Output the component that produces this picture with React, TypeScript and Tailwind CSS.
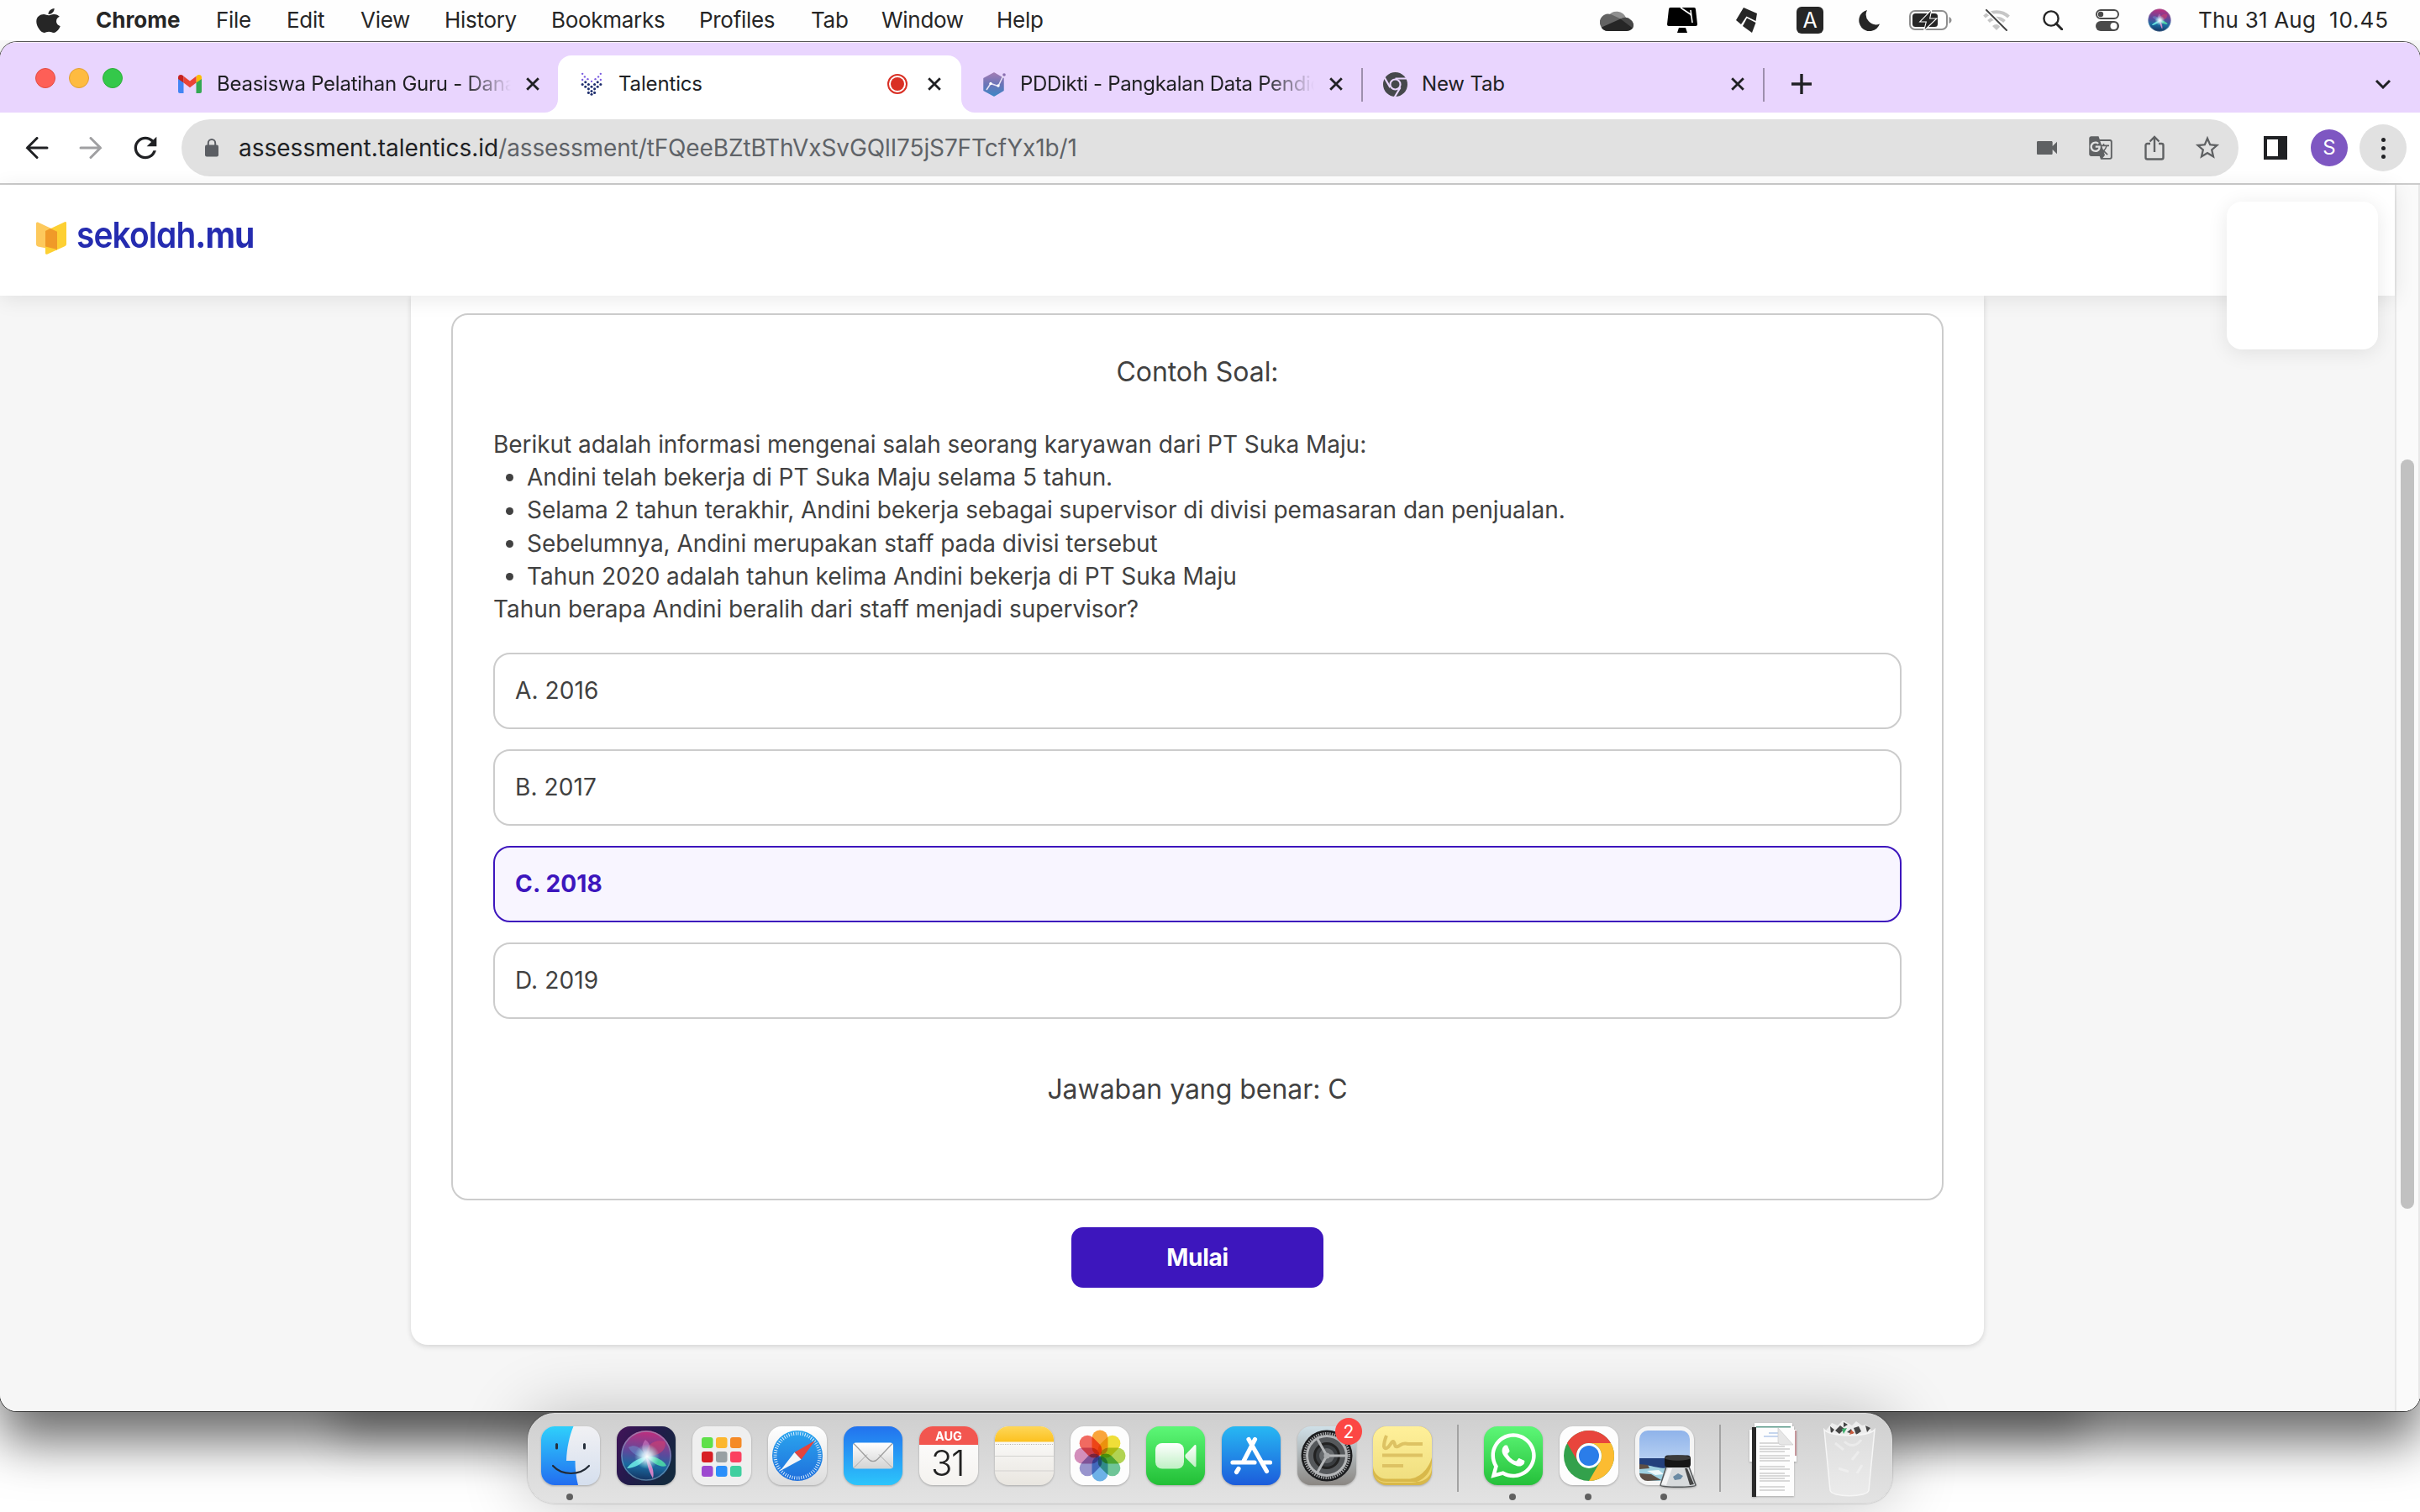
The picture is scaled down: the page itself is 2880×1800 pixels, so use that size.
import React from "react";
import { FaApple, FaWhatsapp } from "react-icons/fa";
import { MdGTranslate, MdStarBorder, MdVideocam, MdRefresh } from "react-icons/md";

const menuItems = [
  { label: "Chrome", cls: "w-[143px] font-bold tracking-normal" },
  { label: "File", cls: "w-[84px]" },
  { label: "Edit", cls: "w-[88px]" },
  { label: "View", cls: "w-[100px]" },
  { label: "History", cls: "w-[127px]" },
  { label: "Bookmarks", cls: "w-[176px]" },
  { label: "Profiles", cls: "w-[133px]" },
  { label: "Tab", cls: "w-[84px]" },
  { label: "Window", cls: "w-[137px]" },
  { label: "Help", cls: "w-[60px]" },
];

function MenuBar() {
  return (
    <div className="relative z-20 flex h-12 w-full shrink-0 items-center justify-between bg-[#fefefe] text-[26px] leading-[48px] text-[#262626]">
      <div className="flex h-full items-center pl-[43px] tracking-[-0.3px]">
        <FaApple className="mr-[42px] h-[33px] w-[29px]" preserveAspectRatio="none" />
        {menuItems.map((m) => (
          <div key={m.label} className={"whitespace-nowrap " + m.cls}>{m.label}</div>
        ))}
      </div>
      <div className="flex h-full items-center">
        <svg className="mr-10 h-[26px] w-10" viewBox="0 0 40 26">
          <path d="M10 8a12 12 0 0 1 21 2l-7 4L9 12z" fill="#8f8f8f" />
          <path d="M9 26a9 9 0 0 1-8-6 10 10 0 0 1 12-14l13 6L4 22z" fill="#636363" />
          <path d="M24 12c4-3 9-3 12 0a8 8 0 0 1 3 11L24 15z" fill="#474747" />
          <path d="M2 21.500L24.500 11.500 39 22.500a9 9 0 0 1-7 3.500H10a9 9 0 0 1-8-4.500z" fill="#262626" />
        </svg>
        <svg className="mr-[46px] h-[30px] w-9" viewBox="0 0 36 30">
          <path d="M4 0H32a2 2 0 0 1 2 2l2 18a2 2 0 0 1-2 2H2a2 2 0 0 1-2-2L2 2a2 2 0 0 1 2-2zM14 24h8l2 6H12z" fill="#000" />
          <path d="M16 0l11 7.500M28 3l2 15M27 7l2 3" stroke="#fff" strokeWidth="1.600" fill="none" />
        </svg>
        <svg className="mr-[47px] h-[30px] w-[25px]" viewBox="0 0 25 30">
          <path d="M9 0l16 7-1.500 9-11-5.500L6 20l-6-5z" fill="#262626" />
          <path d="M13 12.500l10.500 5.500L19 30 8 22z" fill="#262626" />
        </svg>
        <div className="mr-[42px] flex size-8 items-center justify-center rounded-[6px] bg-[#262626] text-[25px] leading-none text-white">A</div>
        <svg className="mr-[35px] size-[25px]" viewBox="0 0 25 25">
          <path d="M10 0A12.700 12.700 0 1 0 25 16.500 12 12 0 0 1 10 0z" fill="#262626" />
        </svg>
        <svg className="mr-[37px] h-6 w-[51px]" viewBox="0 0 51 24">
          <rect x="1" y="1" width="44" height="22" rx="6" fill="none" stroke="#8f8f8f" strokeWidth="2" />
          <path d="M47.500 8c4 1.500 4 6.500 0 8z" fill="#8f8f8f" />
          <rect x="4" y="4" width="30" height="16" rx="3.500" fill="#262626" />
          <path d="M26 1L14 13.500h7L18.500 23 31.500 10.500h-7.500z" fill="#262626" stroke="#fff" strokeWidth="2.200" paintOrder="stroke" />
        </svg>
        <svg className="mr-[39px] h-[27px] w-8" viewBox="0 0 32 27">
          <path d="M1.500 9a21 21 0 0 1 29 0M6.500 14.500a14 14 0 0 1 19 0" stroke="#c6c6c6" strokeWidth="4" fill="none" />
          <path d="M11 20a7 7 0 0 1 10 0l-5 5z" fill="#c6c6c6" />
          <path d="M4 1l24 24" stroke="#fff" strokeWidth="5" />
          <path d="M4 1l24 24" stroke="#444" strokeWidth="2" strokeLinecap="round" />
        </svg>
        <svg className="mr-[39px] size-6" viewBox="0 0 24 24">
          <circle cx="10" cy="10" r="8.600" fill="none" stroke="#262626" strokeWidth="2.400" />
          <path d="M16 16l7 7" stroke="#262626" strokeWidth="3" strokeLinecap="round" />
        </svg>
        <svg className="mr-[34px] h-[26px] w-7" viewBox="0 0 28 26">
          <rect x="1" y="1" width="26" height="10" rx="5" fill="none" stroke="#4a4a4a" strokeWidth="2" />
          <circle cx="6" cy="6" r="3.200" fill="#4a4a4a" />
          <rect x="0" y="14" width="28" height="12" rx="6" fill="#4a4a4a" />
          <circle cx="21.500" cy="20" r="4" fill="#fff" />
        </svg>
        <svg className="mr-[32px] size-7" viewBox="0 0 70 70">
          <SiriOrb r={34} />
        </svg>
        <div className="w-[156px] tracking-[0.2px] whitespace-nowrap">Thu 31 Aug</div>
        <div className="w-[108px] tracking-[0.9px] whitespace-nowrap">10.45</div>
      </div>
    </div>
  );
}

function SiriOrb({ r }: { r: number }) {
  return (
    <g>
      <defs>
        <linearGradient id="siriA" x1="0.500" y1="0" x2="0.400" y2="1">
          <stop offset="0" stopColor="#c22d7c" />
          <stop offset="0.450" stopColor="#5a4a9c" />
          <stop offset="0.700" stopColor="#1a6aa0" />
          <stop offset="1" stopColor="#14305e" />
        </linearGradient>
        <radialGradient id="siriB">
          <stop offset="0" stopColor="#fff" />
          <stop offset="0.350" stopColor="#dffaff" stopOpacity="0.800" />
          <stop offset="1" stopColor="#9fe" stopOpacity="0" />
        </radialGradient>
      </defs>
      <circle cx="35" cy="35" r={r} fill="url(#siriA)" />
      <path d="M35 37C28 24 22 21 14 25c4 8 12 12 21 12z" fill="#6fb6ea" opacity="0.350" />
      <path d="M35 35c0-14 10-20 22-17 3 8-4 18-22 17z" fill="#e0406a" opacity="0.500" />
      <path d="M36 36c8-1 20 4 23 11-6 3-17-3-23-11z" fill="#4fe0a8" opacity="0.850" />
      <path d="M36 36c-12 2-20 8-24 14 10-1 20-6 24-14z" fill="#6ff0e8" opacity="0.850" />
      <path d="M35 37c1 10 4 18 8 25 2-8-1-18-8-25z" fill="#f08ad0" opacity="0.850" />
      <path d="M35 35c-6-6-6-13-1-19 7 5 7 12 1 19z" fill="#f09adf" opacity="0.400" />
      <circle cx="36" cy="36" r="15" fill="url(#siriB)" />
      <circle cx="35" cy="35" r={r - 1} fill="none" stroke="#8fb0c8" strokeOpacity="0.550" strokeWidth="1.300" />
    </g>
  );
}

function Close() {
  return (
    <svg className="size-4 shrink-0" viewBox="0 0 16 16">
      <path d="M1.200 1.200l13.600 13.600M14.800 1.200L1.200 14.800" stroke="#202124" strokeWidth="2.800" />
    </svg>
  );
}

function GmailIcon() {
  return (
    <svg className="h-[22px] w-7 shrink-0" viewBox="0 0 28 22">
      <path d="M0 4v16a2 2 0 0 0 2 2h4.500V8.500z" fill="#4285f4" />
      <path d="M28 4v16a2 2 0 0 1-2 2h-4.500V8.500z" fill="#34a853" />
      <path d="M21.500 2v7.500L28 5V3.200C28 .5 25-.8 22.600.8z" fill="#fbbc04" />
      <path d="M6.500 9.500V1.800L14 7.400l7.500-5.600v7.700L14 15.200z" fill="#ea4335" />
      <path d="M0 3.200V5l6.500 4.500V1.800L5.400.8C3-.8 0 .5 0 3.200z" fill="#c5221f" />
    </svg>
  );
}

const talDots = [
  [1, 1, 0], [25, 1, 0], [4, 5, 0], [22, 5, 0], [1, 9, 0], [8, 8, 0], [18, 8, 0], [25, 9, 0],
  [5, 12, 1], [13, 11, 0], [21, 12, 1], [1, 15, 1], [9, 15, 1], [17, 15, 1], [25, 15, 1],
  [5, 18, 1], [13, 18, 1], [21, 18, 1], [9, 21, 1], [17, 21, 1], [13, 24, 1], [9, 26, 1], [17, 26, 1], [13, 28, 1],
];

function TalenticsIcon() {
  return (
    <svg className="h-7 w-[26px] shrink-0" viewBox="-1 -1 28 31">
      {talDots.map(([x, y, k], i) => (
        <circle key={i} cx={x} cy={y} r={k ? 1.7 : 1.3} fill={k ? "#1f2f6e" : "#7a5be0"} />
      ))}
    </svg>
  );
}

function PddIcon() {
  return (
    <svg className="h-[29px] w-7 shrink-0" viewBox="0 0 28 29">
      <defs>
        <linearGradient id="pdd" x1="0" y1="0" x2="0" y2="1">
          <stop offset="0" stopColor="#a07cb4" />
          <stop offset="0.500" stopColor="#6a74b8" />
          <stop offset="1" stopColor="#3f86c4" />
        </linearGradient>
      </defs>
      <path d="M14 1l11 6.500v14L14 28 2 21.500v-14z" fill="url(#pdd)" stroke="url(#pdd)" strokeWidth="1.500" strokeLinejoin="round" />
      <path d="M5 21l5-7.500 9 3L25 4" stroke="#e9e4f6" strokeWidth="1.500" fill="none" />
      <circle cx="26" cy="3" r="1.800" fill="#8a6fb0" />
      <circle cx="10" cy="13.500" r="1.700" fill="#fff" />
      <circle cx="19" cy="16" r="1.700" fill="#fff" />
    </svg>
  );
}

function GreyChrome() {
  return (
    <svg className="size-[29px] shrink-0" viewBox="0 0 48 48">
      <circle cx="24" cy="24" r="24" fill="#46484b" />
      <circle cx="24" cy="24" r="10" fill="none" stroke="#e9d5fe" strokeWidth="3.500" />
      <path d="M24 12.500H46M14 30L3 11M34 30L23 48.500" stroke="#e9d5fe" strokeWidth="3.500" />
    </svg>
  );
}

function TabStrip() {
  return (
    <div className="flex h-[84px] shrink-0 bg-[#e9d5fe] text-[24px] text-[#202124] shadow-[inset_0_1px_0_#f8f0ff]">
      <div className="flex w-[212px] shrink-0 gap-4 pt-[31px] pl-[42px]">
        <div className="size-6 rounded-full border border-[#e24b41] bg-[#fe5f57]" />
        <div className="size-6 rounded-full border border-[#e1a032] bg-[#febb40]" />
        <div className="size-6 rounded-full border border-[#2dae3a] bg-[#34c84a]" />
      </div>
      <div className="flex w-[452px] shrink-0 items-center pt-4">
        <GmailIcon />
        <div className="ml-[18px] w-[350px] overflow-hidden tracking-[-0.25px] whitespace-nowrap [mask-image:linear-gradient(to_right,#000_295px,transparent_350px)]">
          Beasiswa Pelatihan Guru - Dana
        </div>
        <div className="ml-[18px]"><Close /></div>
      </div>
      <div className="relative mt-4 flex w-[480px] shrink-0 items-center rounded-t-[16px] bg-white pl-[27px]">
        <svg className="absolute bottom-0 -left-4 size-4" viewBox="0 0 16 16"><path d="M16 0v16H0A16 16 0 0 0 16 0z" fill="#fff" /></svg>
        <svg className="absolute -right-4 bottom-0 size-4" viewBox="0 0 16 16"><path d="M0 0v16h16A16 16 0 0 1 0 0z" fill="#fff" /></svg>
        <TalenticsIcon />
        <div className="ml-[19px] w-[318px] tracking-[-0.15px] whitespace-nowrap">Talentics</div>
        <svg className="ml-[2px] size-6" viewBox="0 0 24 24">
          <circle cx="12" cy="12" r="11" fill="#fff" stroke="#d93025" strokeWidth="2" />
          <circle cx="12" cy="12" r="8" fill="#d93025" />
        </svg>
        <div className="ml-[24px]"><Close /></div>
      </div>
      <div className="flex w-[476px] shrink-0 items-center pt-4 pl-[25px]">
        <PddIcon />
        <div className="ml-[17px] w-[350px] overflow-hidden tracking-[-0.3px] whitespace-nowrap [mask-image:linear-gradient(to_right,#000_290px,transparent_350px)]">
          PDDikti - Pangkalan Data Pendid
        </div>
        <div className="ml-[18px]"><Close /></div>
      </div>
      <div className="mt-[31px] h-10 w-[2px] bg-[#9d8fad]" />
      <div className="flex w-[476px] shrink-0 items-center pt-4 pl-[24px]">
        <GreyChrome />
        <div className="ml-[17px] w-[368px] tracking-[-0.15px] whitespace-nowrap">New Tab</div>
        <Close />
      </div>
      <div className="mt-[31px] h-10 w-[2px] bg-[#9d8fad]" />
      <div className="flex flex-1 items-center justify-between pt-4 pr-[34px] pl-8">
        <svg className="size-6" viewBox="0 0 24 24"><path d="M12 0.500v23M0.500 12h23" stroke="#202124" strokeWidth="3.400" strokeLinecap="round" /></svg>
        <svg className="h-3 w-5" viewBox="0 0 20 12"><path d="M2 2l8 8 8-8" stroke="#202124" strokeWidth="3" fill="none" /></svg>
      </div>
    </div>
  );
}

function Toolbar() {
  return (
    <div className="flex h-[86px] shrink-0 items-center border-b-2 border-[#ccc] bg-white pl-[30px] text-[28px]">
      <svg className="h-[26px] w-7" viewBox="0 0 28 26"><path d="M26 13H2.500M14 1.500L2.500 13 14 24.500" stroke="#202124" strokeWidth="3" fill="none" strokeLinecap="round" /></svg>
      <svg className="ml-9 h-[26px] w-7" viewBox="0 0 28 26"><path d="M2 13h23.500M14 1.500L25.500 13 14 24.500" stroke="#a0a0a2" strokeWidth="3" fill="none" strokeLinecap="round" /></svg>
      <MdRefresh className="ml-[31px] size-[40px] text-[#202124]" />
      <div className="ml-[23px] flex h-[68px] w-[2448px] shrink-0 items-center rounded-full bg-[#e1e1e1] pl-7">
        <svg className="h-[22px] w-4" viewBox="0 0 16 22">
          <rect x="0" y="7.500" width="16" height="14" rx="2" fill="#5b5e63" />
          <path d="M3.800 8V5.200a4.200 4.200 0 0 1 8.400 0V8" fill="none" stroke="#5b5e63" strokeWidth="2" />
        </svg>
        <div className="ml-6 w-[2135px] whitespace-nowrap text-[#5f6368]">
          <span className="text-[#202124]">assessment.talentics.id</span>
          <span className="tracking-[-0.12px]">/assessment/tFQeeBZtBThVxSvGQlI75jS7FTcfYx1b/1</span>
        </div>
        <MdVideocam className="h-[32px] w-[34px] text-[#5f6163]" />
        <MdGTranslate className="ml-[32px] size-[30px] text-[#5f6163]" />
        <svg className="ml-[37px] h-[30px] w-6" viewBox="0 0 24 30">
          <path d="M7 10H3.500A2 2 0 0 0 1.500 12v14.500a2 2 0 0 0 2 2h17a2 2 0 0 0 2-2V12a2 2 0 0 0-2-2H17M12 20V2M6.500 7.500L12 2l5.500 5.500" stroke="#5f6163" strokeWidth="2.400" fill="none" />
        </svg>
        <MdStarBorder className="ml-[34px] size-[34px] text-[#5f6163]" />
      </div>
      <div className="ml-[30px] h-7 w-7 border-[4px] border-r-[11px] border-[#202124]" />
      <div className="ml-7 flex size-11 items-center justify-center rounded-full bg-[#7e57c2] text-[24px] leading-none text-white">S</div>
      <div className="ml-[14px] flex size-14 flex-col items-center justify-center gap-[5px] rounded-full bg-[#e1e1e1]">
        <div className="size-[5px] rounded-full bg-[#202124]" />
        <div className="size-[5px] rounded-full bg-[#202124]" />
        <div className="size-[5px] rounded-full bg-[#202124]" />
      </div>
    </div>
  );
}

const facts = [
  "Andini telah bekerja di PT Suka Maju selama 5 tahun.",
  "Selama 2 tahun terakhir, Andini bekerja sebagai supervisor di divisi pemasaran dan penjualan.",
  "Sebelumnya, Andini merupakan staff pada divisi tersebut",
  "Tahun 2020 adalah tahun kelima Andini bekerja di PT Suka Maju",
];

const options = ["A. 2016", "B. 2017", "C. 2018", "D. 2019"];

function Page() {
  return (
    <div className="relative flex h-[1460px] shrink-0 bg-[#f6f6f6]">
      <div className="flex w-[2850px] shrink-0 flex-col">
        <header className="relative z-10 flex h-[132px] shrink-0 items-start bg-white pt-11 pl-[43px] shadow-[0_4px_24px_rgba(0,0,0,0.09)]">
          <svg className="h-[39px] w-9" viewBox="0 0 36 39">
            <path d="M2 .6L18 8l7 4v22L2 29.500a3 3 0 0 1-2-3V2a1.500 1.500 0 0 1 2-1.400z" fill="#fdc95c" />
            <path d="M34 .2L11 11v26.500a1.500 1.500 0 0 0 2 1.200l21-9.500a3 3 0 0 0 2-3V1.500A1.500 1.500 0 0 0 34 .2z" fill="#fdd033" />
            <path d="M11 11l6-3 8 3.800V33l-14-3.500z" fill="#f09a28" />
          </svg>
          <div className="-mt-[11px] ml-[12px] origin-left scale-x-[0.905] text-[43px] leading-[52px] font-semibold tracking-[-1px] whitespace-nowrap text-[#252cb0] [font-feature-settings:'cv11']">
            sekolah<span className="font-bold">.mu</span>
          </div>
        </header>
        <main className="ml-[489px] flex h-[1249px] w-[1872px] shrink-0 flex-col items-center rounded-b-[20px] bg-white px-12 pt-[21px] shadow-[0_2px_6px_rgba(0,0,0,0.14)]">
          <section className="flex h-[1056px] w-full shrink-0 flex-col rounded-[20px] border-2 border-[#ccc] px-12 pt-12 text-[28px] leading-[39.2px] text-[#414141]">
            <h2 className="text-center text-[32px] leading-10 tracking-[-0.05px]">Contoh Soal:</h2>
            <div className="mt-[47px] h-[235px] tracking-[-0.05px] whitespace-nowrap">
              <p>Berikut adalah informasi mengenai salah seorang karyawan dari PT Suka Maju:</p>
              <ul>
                {facts.map((f) => (
                  <li key={f} className="flex items-center">
                    <span className="mr-4 ml-[15px] size-[9px] rounded-full bg-[#414141]" />
                    {f}
                  </li>
                ))}
              </ul>
              <p>Tahun berapa Andini beralih dari staff menjadi supervisor?</p>
            </div>
            <div className="mt-8 flex flex-col gap-6">
              {options.map((o) => (
                <div
                  key={o}
                  className={
                    o[0] === "C"
                      ? "flex h-[91px] items-center rounded-[20px] border-2 border-[#3d16bd] bg-[#f8f5ff] px-6 font-bold tracking-[0.2px] text-[#3d16bd]"
                      : "flex h-[91px] items-center rounded-[20px] border-2 border-[#ccc] bg-white px-6 tracking-[0.1px]"
                  }
                >
                  {o}
                </div>
              ))}
            </div>
            <p className="mt-16 text-center text-[32px] leading-10 tracking-[-0.05px]">Jawaban yang benar: C</p>
          </section>
          <button className="mt-8 h-[72px] w-[300px] shrink-0 rounded-[14px] bg-[#3d16bd] text-[28px] font-bold tracking-[-0.3px] text-white">Mulai</button>
        </main>
      </div>
      <div className="h-full w-[30px] border-x-2 border-[#e8e8e8] bg-[#fafafa] pt-[327px]">
        <div className="mx-auto h-[892px] w-4 rounded-full bg-[#c1c1c1]" />
      </div>
      <div className="absolute top-5 left-[2650px] z-20 h-44 w-[180px] rounded-[18px] bg-white shadow-[0_4px_24px_rgba(0,0,0,0.09)]" />
    </div>
  );
}

function Tile({ children, dot, badge }: { children: React.ReactNode; dot?: boolean; badge?: string }) {
  return (
    <div className="relative size-[70px] shrink-0">
      <svg className="size-full overflow-visible drop-shadow-[0_1px_1px_rgba(0,0,0,0.25)]" viewBox="0 0 70 70">{children}</svg>
      {dot && <div className="absolute -bottom-[18px] left-[30px] size-2 rounded-full bg-[#606060]" />}
      {badge && (
        <div className="absolute -top-[10px] left-[45px] flex size-8 items-center justify-center rounded-full bg-[#fc4744] text-[21px] leading-none text-white">{badge}</div>
      )}
    </div>
  );
}

function Grad({ id, a, b }: { id: string; a: string; b: string }) {
  return (
    <defs>
      <linearGradient id={id} x1="0" y1="0" x2="0" y2="1">
        <stop offset="0" stopColor={a} />
        <stop offset="1" stopColor={b} />
      </linearGradient>
    </defs>
  );
}

const launch = ["#5fe04a", "#fcb72e", "#f58a26", "#d81e24", "#98a0a3", "#fb4160", "#9d49d0", "#2a8ffa", "#3fcf9f"];
const petals = ["#fb9a1f", "#efdc1c", "#a9cf3a", "#5cbf8a", "#5aa9e6", "#8b86c9", "#cf7fb4", "#f2564c"];

function Dock() {
  return (
    <div className="absolute top-[1682px] left-[628px] z-20 flex h-[108px] w-[1624px] items-start gap-5 rounded-[32px] border border-[#dcdcdc] bg-linear-to-b from-[#cfcfcf] to-[#e3e3e3] pt-[15px] pl-[15px] shadow-[0_0_2px_rgba(0,0,0,0.35),0_0_80px_rgba(0,0,0,0.24)]">
      <Tile dot>
        <Grad id="fin" a="#2fd0fb" b="#226df0" />
        <Grad id="fin2" a="#f1f1f4" b="#d5dfee" />
        <rect width="70" height="70" rx="16" fill="url(#fin2)" />
        <path d="M16 0h22.500c-5 12-8 26-8.500 41h10.500c0 10 1 19 3.500 29H16A16 16 0 0 1 0 54V16A16 16 0 0 1 16 0z" fill="url(#fin)" />
        <path d="M14 47c11 12 32 12 43 0" stroke="#222a35" strokeWidth="2.200" fill="none" strokeLinecap="round" />
        <path d="M18.500 21.500v4.500M51.500 21.500v4.500" stroke="#26303c" strokeWidth="3" strokeLinecap="round" />
      </Tile>
      <Tile>
        <defs>
          <linearGradient id="sirbg" x1="0" y1="0" x2="1" y2="0.600">
            <stop offset="0" stopColor="#431459" />
            <stop offset="0.500" stopColor="#231a4c" />
            <stop offset="1" stopColor="#14293f" />
          </linearGradient>
        </defs>
        <rect width="70" height="70" rx="16" fill="url(#sirbg)" />
        <SiriOrb r={30} />
      </Tile>
      <Tile>
        <rect width="70" height="70" rx="16" fill="#efefef" />
        {launch.map((c, i) => (
          <rect key={c} x={11 + (i % 3) * 17} y={13 + Math.floor(i / 3) * 17} width="13.500" height="13" rx="3" fill={c} />
        ))}
      </Tile>
      <Tile>
        <Grad id="saf" a="#ffffff" b="#dcdcdc" />
        <Grad id="saf2" a="#2aa5ee" b="#1f6fdc" />
        <rect width="70" height="70" rx="16" fill="url(#saf)" />
        <circle cx="35" cy="35" r="30" fill="url(#saf2)" />
        <circle cx="35" cy="35" r="26.500" fill="none" stroke="#e8f4fd" strokeWidth="4" strokeDasharray="0.900 1.870" />
        <path d="M56 17L39.500 39.500 31.500 31z" fill="#e4443c" />
        <path d="M14.500 53L31.500 31 39.500 39.500z" fill="#f4f6f8" />
      </Tile>
      <Tile>
        <Grad id="mail" a="#2272ee" b="#2cc5fb" />
        <Grad id="mail2" a="#ffffff" b="#d3d3d3" />
        <rect width="70" height="70" rx="16" fill="url(#mail)" />
        <rect x="11" y="19.500" width="48" height="31" rx="3.500" fill="url(#mail2)" />
        <path d="M12 49.500l16-16M58 49.500L42 33.500" stroke="#a9a9a9" strokeWidth="1" fill="none" />
        <path d="M12 20.500l17.500 18.500c3 3.500 8 3.500 11 0L58 20.500" stroke="#9c9c9c" strokeWidth="1.200" fill="none" />
      </Tile>
      <Tile>
        <Grad id="cal" a="#ffffff" b="#f4f2ef" />
        <rect width="70" height="70" rx="16" fill="url(#cal)" />
        <path d="M16 0h38a16 16 0 0 1 16 16v6H0v-6A16 16 0 0 1 16 0z" fill="#f2564f" />
        <text x="35" y="17" textAnchor="middle" fontSize="14.500" fontWeight="700" fill="#fff" fontFamily="Inter">AUG</text>
        <text x="33.500" y="59" textAnchor="middle" fontSize="42" fontWeight="300" letterSpacing="-1.500" fill="#222" fontFamily="Inter">31</text>
      </Tile>
      <Tile>
        <Grad id="note" a="#ffffff" b="#e9e6e0" />
        <Grad id="note2" a="#fed75a" b="#fcc11f" />
        <rect width="70" height="70" rx="16" fill="url(#note)" />
        <path d="M16 0h38a16 16 0 0 1 16 16v2.500H0V16A16 16 0 0 1 16 0z" fill="url(#note2)" />
        <path d="M0 35.500h70M0 53h70" stroke="#d3d2cf" strokeWidth="1.200" />
        <path d="M1 21.500h68" stroke="#b5b2ac" strokeWidth="1.200" strokeDasharray="1.200 1.600" />
      </Tile>
      <Tile>
        <rect width="70" height="70" rx="16" fill="#fdfdfd" />
        {petals.map((c, i) => (
          <rect key={c} x="25.500" y="4.500" width="19" height="30" rx="9.500" fill={c} opacity="0.880" style={{ mixBlendMode: "multiply" }} transform={`rotate(${i * 45} 35 35)`} />
        ))}
      </Tile>
      <Tile>
        <Grad id="ft" a="#5df777" b="#22bf36" />
        <Grad id="ft2" a="#ffffff" b="#bff0c4" />
        <rect width="70" height="70" rx="16" fill="url(#ft)" />
        <rect x="11" y="20" width="34" height="30.500" rx="8" fill="url(#ft2)" />
        <path d="M47 33.500l10.500-11c1.300-1 2 0 2 1.200v23c0 1.200-.7 2.200-2 1.200L47 37.500c-.8-1.500-.8-3 0-4z" fill="url(#ft2)" />
      </Tile>
      <Tile>
        <Grad id="as" a="#27b8f3" b="#1c5cdb" />
        <rect width="70" height="70" rx="16" fill="url(#as)" />
        <path d="M39.500 15.500L26 41.500M32 15.500l21.500 38M13 43h26M48 43h9.500M20 50.500l-2.500 4" stroke="#fff" strokeWidth="5.200" strokeLinecap="round" fill="none" />
      </Tile>
      <Tile badge="2">
        <Grad id="sys" a="#cfe0e8" b="#8b8783" />
        <rect width="70" height="70" rx="16" fill="url(#sys)" />
        <circle cx="35" cy="35" r="30.500" fill="#1c1d1f" />
        <circle cx="35" cy="35" r="26.500" fill="none" stroke="#a9abad" strokeWidth="3" strokeDasharray="1.400 1.370" />
        <circle cx="35" cy="35" r="23.500" fill="#55585b" stroke="#b4b6b8" strokeWidth="3" />
        <circle cx="35" cy="35" r="14.500" fill="#3a3d40" stroke="#222" strokeWidth="3" />
        <circle cx="35" cy="35" r="9" fill="#66696c" />
        <path d="M35 35h22M35 35L24 15.500M35 35L24 54.500" stroke="#b4b6b8" strokeWidth="3" />
        <circle cx="35" cy="35" r="3.500" fill="#a9abad" />
      </Tile>
      <Tile>
        <Grad id="st" a="#fff09a" b="#f0df80" />
        <rect width="70" height="70" rx="16" fill="#d8b84a" />
        <path d="M0 50c0 10 6 17 16 17h30c12 0 24-12 24-26v8c0 10-8 17-18 17H16C6 66 0 60 0 50z" fill="#f0d873" />
        <path d="M16 0h38a16 16 0 0 1 16 16v21C66 52 54 62.500 42 62.500H16A16 16 0 0 1 0 47V16A16 16 0 0 1 16 0z" fill="url(#st)" />
        <path d="M16 11c-2 5-3 9-3 13 1 4 5 2 8-3s4-3 5 1 4 2 7 0 5-2 9-1h17M11 34.500h48M11 47h25" stroke="#ddc263" strokeWidth="4" fill="none" />
      </Tile>
      <div className="-mt-[2px] ml-[10px] h-20 w-[2px] bg-[#a3a3a3]" />
      <div className="ml-[10px] flex gap-5">
        <Tile dot>
          <Grad id="wa" a="#5df777" b="#25c03a" />
          <rect width="70" height="70" rx="16" fill="url(#wa)" />
          <FaWhatsapp x="4.500" y="4.500" width="61" height="61" size={61} color="#fff" />
        </Tile>
        <Tile dot>
          <rect width="70" height="70" rx="16" fill="#fdfdfd" />
          <circle cx="35" cy="35" r="30" fill="#33a14c" />
          <path d="M9 20a30 30 0 0 1 52 0H35A15 15 0 0 0 22 42.500z" fill="#e8453c" />
          <path d="M61 20a30 30 0 0 1-26 45l13-22.500A15 15 0 0 0 35 20z" fill="#fcbc31" />
          <circle cx="35" cy="35" r="15" fill="#fff" />
          <circle cx="35" cy="35" r="12" fill="#2b7de9" />
        </Tile>
        <Tile dot>
          <Grad id="pv" a="#8fb3ea" b="#b5cff2" />
          <rect width="70" height="70" rx="16" fill="#f4f4f4" />
          <path d="M15 5h40a10 10 0 0 1 10 10v24H5V15A10 10 0 0 1 15 5z" fill="url(#pv)" />
          <path d="M5 38h60v14H5z" fill="#23407c" />
          <path d="M5 47c12-3 22 5 34 2l26 3v3a10 10 0 0 1-10 10H15A10 10 0 0 1 5 55z" fill="#9fd0e0" />
          <path d="M5 45l10 1 2 4-12 1zM5 56l14 1 12 7-16 1A10 10 0 0 1 5 56z" fill="#5e4f45" />
          <path d="M14 53l14-1 6 5-10 1z" fill="#eef8fb" />
          <path d="M37 48h27l8 22c0 3-42 3-42 0z" fill="#d7dadc" stroke="#55585a" strokeWidth="1.500" />
          <path d="M39 50h5l-7 20-6-1z" fill="#fff" opacity="0.700" />
          <path d="M62 50l8 19-5 1-6-20z" fill="#444" />
          <path d="M45 60l6-4 6 3-3 4-7 1z" fill="#6b8ba4" />
          <rect x="35" y="34.500" width="31" height="14.500" rx="4" fill="#161616" />
          <ellipse cx="50.500" cy="37.500" rx="15.500" ry="3.200" fill="#3c3c3c" />
        </Tile>
      </div>
      <div className="-mt-[2px] ml-[10px] h-20 w-[2px] bg-[#a3a3a3]" />
      <div className="ml-[26px] flex gap-[6px]">
        <Tile>
          <rect x="-12" y="4" width="56" height="38" fill="#fff" />
          <path d="M43 5v30" stroke="#8c2f39" strokeWidth="1" />
          <rect x="-6" y="-4" width="45" height="60" fill="#fff" />
          <rect x="-4" y="0" width="45" height="83" fill="#fdfdfd" />
          <rect x="-4" y="0" width="41" height="1.500" fill="#5c9a8a" />
          <rect x="-9" y="1" width="5" height="83" fill="#2a2a2a" />
          <path d="M11 8h14M5 12h20" stroke="#8fb0e0" strokeWidth="1.200" />
          {[20, 24, 27, 30, 35, 38, 41, 48, 51, 56, 59, 62, 65, 72, 76].map((y) => (
            <path key={y} d={`M0 ${y}h${y % 2 ? 36 : 30}`} stroke="#b5b5b5" strokeWidth="1" />
          ))}
          <path d="M22 2l18 20H26a4 4 0 0 1-4-4z" fill="#e6e6e6" stroke="#ccc" strokeWidth="0.700" />
        </Tile>
        <div className="size-[70px]">
          <svg className="size-full overflow-visible" viewBox="0 0 70 70">
            <Grad id="tr" a="#dedede" b="#ececec" />
            <path d="M3 5L10-4l7 3 6-6 6 3 5 3 5-5 7 5 5-1 7 8-3 7H8z" fill="#ededed" />
            <path d="M8 0l5 4-4 5zM14 5l6-6 5 4-6 6zM24-5l5 3-5 3zM36 2l6-2 3 6-6 4zM50-1l6 3-4 5zM28 7l5-4 2 6z" fill="#464646" />
            <path d="M22 3l6-1-4 7z" fill="#3fb06e" />
            <path d="M33 4l4 4-6 2z" fill="#c85a3c" />
            <path d="M1 4c8 9 52 9 60 0L54 76c-1 9-45 9-46 0z" fill="url(#tr)" fillOpacity="0.950" stroke="#f6f6f6" strokeWidth="1.500" />
            <path d="M25 18c8 8 16 4 20-2M14 20l10 8M42 30l-8 10M18 50l12 4M46 46l-6 10" stroke="#f6f6f6" strokeWidth="3" fill="none" opacity="0.500" />
          </svg>
        </div>
      </div>
    </div>
  );
}

export default function App() {
  return (
    <div className="relative flex h-[1800px] w-[2880px] flex-col overflow-hidden bg-white font-['Inter',sans-serif]">
      <MenuBar />
      <div className="absolute top-[1600px] left-[400px] h-[80px] w-[2080px] shadow-[0_34px_50px_rgba(0,0,0,0.25)]" />
      <div className="relative mt-[2px] h-[1630px] shrink-0 rounded-[20px] shadow-[0_0_0_1px_rgba(0,0,0,0.65),0_36px_60px_rgba(0,0,0,0.58)]">
        <div className="flex h-full flex-col overflow-hidden rounded-[20px]">
          <TabStrip />
          <Toolbar />
          <Page />
        </div>
      </div>
      <Dock />
    </div>
  );
}
